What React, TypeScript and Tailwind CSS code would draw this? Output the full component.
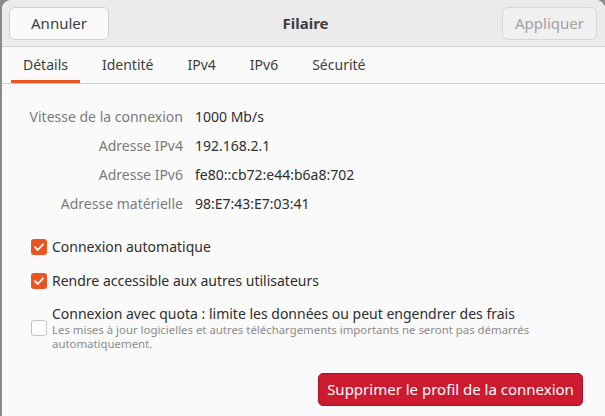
import type { ReactNode } from 'react';

const font = { fontFamily: '"Noto Sans", "Liberation Sans", sans-serif' };

const tabs = ['Détails', 'Identité', 'IPv4', 'IPv6', 'Sécurité'];

const details: Array<{ label: string; value: string }> = [
  { label: 'Vitesse de la connexion', value: '1000 Mb/s' },
  { label: 'Adresse IPv4', value: '192.168.2.1' },
  { label: 'Adresse IPv6', value: 'fe80::cb72:e44:b6a8:702' },
  { label: 'Adresse matérielle', value: '98:E7:43:E7:03:41' },
];

function CheckBox({ checked }: { checked: boolean }) {
  if (!checked) {
    return <span className="h-[16px] w-[16px] shrink-0 rounded-[3px] border border-[#c4c4c4] bg-[#fdfdfd]" />;
  }
  return (
    <span className="flex h-[16px] w-[16px] shrink-0 items-center justify-center rounded-[3px] bg-[#e95420]">
      <svg viewBox="0 0 16 16" className="h-[16px] w-[16px]">
        <path d="M4 8.2 L6.8 11 L12 5.4" fill="none" stroke="#ffffff" strokeWidth="1.8" strokeLinecap="round" strokeLinejoin="round" />
      </svg>
    </span>
  );
}

function CheckRow({ checked, children }: { checked: boolean; children: ReactNode }) {
  return (
    <div className="flex items-center gap-[5px]">
      <CheckBox checked={checked} />
      <div className="min-w-0">{children}</div>
    </div>
  );
}

export default function App() {
  return (
    <div className="h-[416px] w-[605px] overflow-hidden bg-[#8a8a8a]" style={font}>
      <div className="ml-[2px] flex h-full flex-col overflow-hidden rounded-tl-[9px] rounded-tr-[9px] bg-[#fafafa]">
        <header className="flex h-[47px] shrink-0 items-center justify-between border-b border-[#d2d2d2] bg-[#ebebeb] pl-[7px] pr-[8px]">
          <button className="h-[33px] w-[100px] rounded-[6px] border border-[#cfcfcf] bg-[#fafafa] text-[15px] text-[#3d3d3d]">
            Annuler
          </button>
          <div className="text-[15px] font-bold text-[#3d3d3d]">Filaire</div>
          <button className="h-[33px] w-[95px] rounded-[6px] border border-[#d6d6d6] bg-[#f0f0f0] text-[15px] text-[#a2a2a2]">
            Appliquer
          </button>
        </header>

        <nav className="flex h-[37px] shrink-0 items-stretch gap-[10px] border-b border-[#d0d0d0] pl-[9px]">
          {tabs.map((tab, i) => (
            <div
              key={tab}
              className={`flex items-center border-b-[3px] px-[12px] pt-[1px] text-[14px] text-[#3d3d3d] ${
                i === 0 ? 'border-[#e95420]' : 'border-transparent'
              }`}
            >
              {tab}
            </div>
          ))}
        </nav>

        <div className="flex flex-1 flex-col bg-[#fafafa]">
          <div className="mt-[18px] grid grid-cols-[181px_1fr] gap-x-[12px] text-[14px]">
            {details.map((row) => (
              <div key={row.label} className="contents">
                <div className="flex h-[29px] items-center justify-end text-[#7b7b7b]">{row.label}</div>
                <div className="flex h-[29px] items-center text-[#2e2e2e]">{row.value}</div>
              </div>
            ))}
          </div>

          <div className="mt-[19px] flex flex-col pl-[29px] text-[14px] text-[#2e2e2e]">
            <CheckRow checked>
              <div className="leading-[20px]">Connexion automatique</div>
            </CheckRow>
            <div className="mt-[14px]">
              <CheckRow checked>
                <div className="leading-[20px]">Rendre accessible aux autres utilisateurs</div>
              </CheckRow>
            </div>
            <div className="mt-[13px]">
              <CheckRow checked={false}>
                <div className="leading-[19px]">Connexion avec quota : limite les données ou peut engendrer des frais</div>
                <div className="w-[500px] text-[11.4px] leading-[14px] text-[#8a8a8a]">
                  Les mises à jour logicielles et autres téléchargements importants ne seront pas démarrés automatiquement.
                </div>
              </CheckRow>
            </div>
          </div>

          <div className="mt-auto flex justify-end pb-[10px] pr-[22px]">
            <button className="h-[33px] w-[265px] rounded-[5px] border border-[#a8122a] bg-[#cc1a30] text-[15px] text-white">
              Supprimer le profil de la connexion
            </button>
          </div>
        </div>
      </div>
    </div>
  );
}
